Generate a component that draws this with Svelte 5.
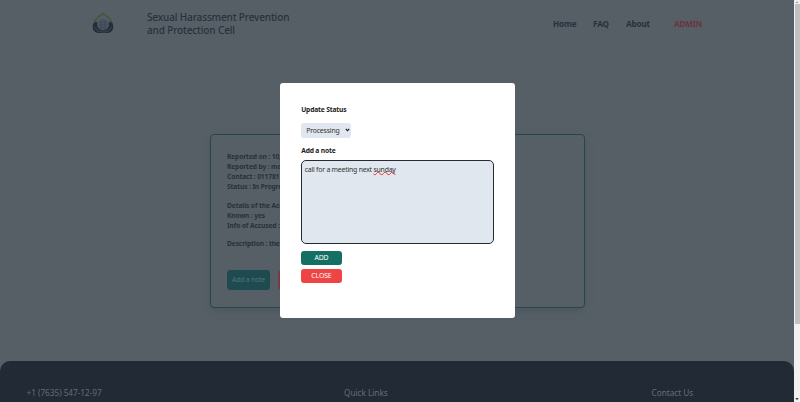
<script>
  const links = ['Home', 'FAQ', 'About'];
  let status = $state('Processing');
  const details = [
    ['Reported on : 10,', 'Reported by : ma', 'Contact : 011781', 'Status : In Progress'],
    ['Details of the Accused', 'Known : yes', 'Info of Accused :'],
    ['Description : the']
  ];
</script>

<div class="window">
  <div class="page">
    <header>
      <svg class="logo" width="24" height="26" viewBox="0 0 24 26">
        <path d="M4 11C-.5 16 2 23 8 23h8c6 0 8.500-7 4-12l-3 2c1 4-1 6-5 6s-6-2-5-6z" fill="#252d3b" />
        <circle cx="12" cy="14.500" r="6" fill="#4b5561" />
        <path d="M3.500 12.500C4 8 9 6.500 12 3.500c3 3 8 4.500 8.500 9" fill="none" stroke="#435842" stroke-width="1.800" />
        <path d="M8 15h8M9 12h6M8 18h8M10 11v9M14 11v9" stroke="#384350" stroke-width=".6" />
        <path d="M3 17l4 4M21 17l-4 4M6 20.500c4 2 8 2 12 0" fill="none" stroke="#4e5963" stroke-width=".6" />
      </svg>
      <h1>Sexual Harassment Prevention<br />and Protection Cell</h1>
      <nav>
        {#each links as link}<span class={link.toLowerCase()}>{link}</span>{/each}
        <span class="admin">ADMIN</span>
      </nav>
    </header>

    <section class="report">
      {#each details as group}
        <div class="group">
          {#each group as line}<p>{line}</p>{/each}
        </div>
      {/each}
      <div class="actions">
        <span class="note">Add a note</span>
        <span class="reject"></span>
      </div>
    </section>

    <footer>
      <span class="phone">+1 (7635) 547-12-97</span>
      <span class="quick">Quick Links</span>
      <span class="contact">Contact Us</span>
    </footer>

    <div class="modal">
      <b class="t1">Update Status</b>
      <button class="select" onclick={() => (status = status === 'Processing' ? 'Resolved' : 'Processing')}>
        <span>{status}</span>
        <svg width="5" height="4" viewBox="0 0 5 4"><path d="M.8 1l1.700 1.700L4.200 1" fill="none" stroke="#222" stroke-width="1.100" /></svg>
      </button>
      <b class="t2">Add a note</b>
      <div class="area">call for a meeting next <span class="typo">sunday</span></div>
      <button class="add">ADD</button>
      <button class="close">CLOSE</button>
    </div>
  </div>
  <div class="scroll">
    <svg width="6" height="4" viewBox="0 0 6 4"><path d="M1.500 3L3 1.200 4.500 3z" fill="#999" /></svg>
    <div class="thumb"></div>
    <svg class="down" width="6" height="6" viewBox="0 0 6 6"><path d="M1.300 2h3.400L3 4.200z" fill="#444" /></svg>
  </div>
</div>

<style>
  :global(body) { overflow: hidden; }
  .window { display: flex; width: 800px; height: 402px; font-family: "Noto Sans", "Open Sans", sans-serif; }
  .page { position: relative; display: flex; flex-direction: column; width: 794px; height: 402px; background: #565f66; overflow: hidden; }
  header { display: flex; align-items: flex-start; height: 134px; color: #28313d; }
  .logo { margin: 10px 0 0 91px; }
  h1 { margin: 11px 0 0 32px; width: 200px; font-size: 10px; line-height: 13.2px; font-weight: 500; white-space: nowrap; letter-spacing: -.14px; }
  nav { display: flex; margin: 17px 0 0 206px; font-size: 8.200px; line-height: 14px; font-weight: 700; letter-spacing: -.18px; white-space: nowrap; }
  nav span { width: 40px; }
  nav .faq { width: 33px; }
  nav .about { width: 48px; }
  nav .admin { color: #6c343b; }
  .report { box-sizing: border-box; width: 375.500px; height: 173.500px; margin-left: 209.500px; padding: 17px 0 0 16.500px; border: 1px solid #28444c; border-radius: 4px; box-shadow: 0 3px 7px #4e575f; color: #28313c; font-size: 6.700px; font-weight: 700; letter-spacing: -.13px; }
  .group { margin-bottom: 8.600px; }
  p { margin: 0; line-height: 10px; white-space: nowrap; }
  .actions { display: flex; gap: 8px; margin-top: 21px; }
  .note, .reject { width: 43px; height: 20px; border-radius: 3px; background: #1f4b50; color: #53747a; font-size: 6.700px; font-weight: 400; line-height: 20px; text-align: center; white-space: nowrap; }
  .reject { background: #743c46; }
  footer { box-sizing: border-box; display: flex; height: 41px; margin-top: 53.500px; padding: 25px 0 0 26.500px; border-radius: 10px 10px 0 0; background: #222a35; color: #646c76; font-size: 8.300px; line-height: 14px; letter-spacing: -.06px; white-space: nowrap; }
  .phone { width: 317.500px; }
  .quick { width: 307.500px; }
  .modal { position: absolute; box-sizing: border-box; left: 279.700px; top: 82.500px; width: 235.300px; height: 235px; padding: 22px 21px 0 21.500px; border-radius: 3px; background: #fff; display: flex; flex-direction: column; align-items: flex-start; color: #222; }
  b { font-size: 6.700px; line-height: 10px; font-weight: 700; letter-spacing: -.17px; }
  button { padding: 0; border: 0; font-family: inherit; }
  .select { display: flex; align-items: center; justify-content: space-between; box-sizing: border-box; width: 49.500px; height: 15px; margin: 8px 0 8px; padding: 0 1px 0 5px; border-radius: 3px; background: #e1e7ef; color: #333; font-size: 6.900px; letter-spacing: -.17px; }
  .area { box-sizing: border-box; width: 192.500px; height: 84px; margin: 4.500px 0 7.300px; padding: 3.500px 0 0 2.500px; border: 1px solid #242b34; border-radius: 5px; background: #e0e7ef; color: #333; font-size: 6.900px; line-height: 10px; letter-spacing: -.22px; }
  .typo { text-decoration: underline wavy #f02c2c .5px; text-underline-offset: -.8px; text-decoration-skip-ink: none; }
  .add, .close { width: 40.500px; height: 13.500px; border-radius: 3px; color: #fff; font-size: 6.900px; line-height: 13.500px; letter-spacing: -.12px; background: #137063; }
  .close { margin-top: 4.700px; background: #ef4444; }
  .scroll { display: flex; flex-direction: column; width: 6px; height: 402px; background: #f1f1f1; }
  .thumb { width: 5px; height: 320px; margin-left: 1px; background: #c1c1c1; }
  .down { margin-top: auto; }
</style>
